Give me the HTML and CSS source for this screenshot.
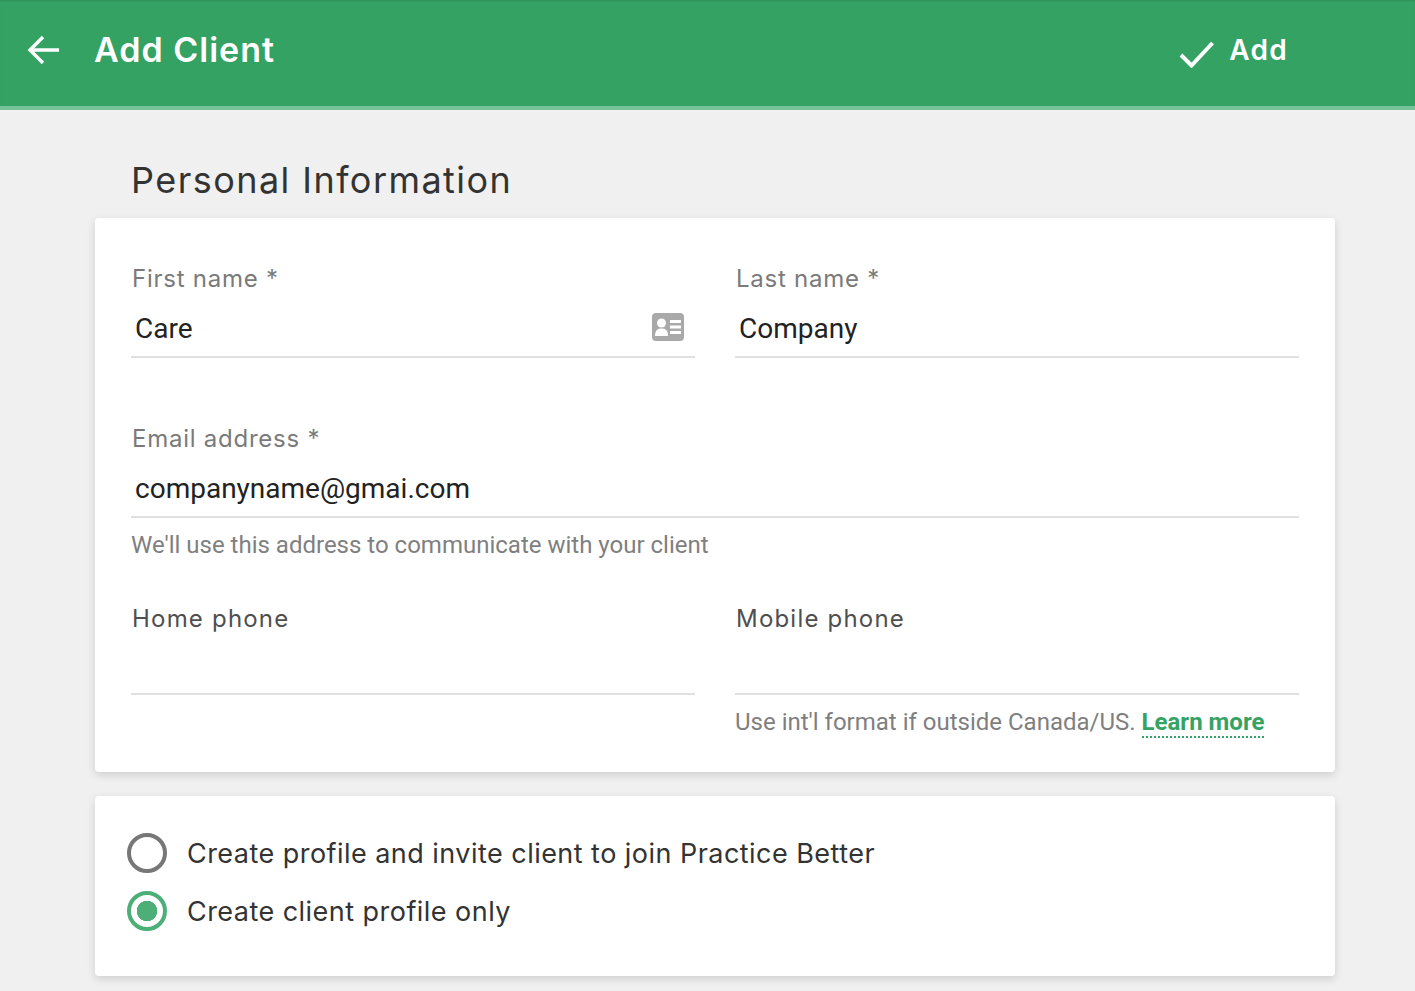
FILE: index.html
```html
<!DOCTYPE html>
<html lang="en">
<head>
<meta charset="utf-8">
<title>Add Client</title>
<link rel="stylesheet" href="styles.css">
</head>
<body>
<header class="topbar">
  <svg class="back" width="34" height="34" viewBox="0 0 34 34"><path d="M32 17H3M16 4 3 17l13 13" fill="none" stroke="#fff" stroke-width="3.400"/></svg>
  <h1 class="title">Add Client</h1>
  <div class="action">
    <svg class="check" width="36" height="28" viewBox="0 0 36 28"><path d="M2 15l10.500 10.500L33.500 3" fill="none" stroke="#fff" stroke-width="4"/></svg>
    <span class="action-text">Add</span>
  </div>
</header>
<main class="content">
  <h2 class="section-title">Personal Information</h2>
  <section class="card info">
    <div class="row">
      <div class="field">
        <label class="label muted">First name *</label>
        <div class="input"><span>Care</span>
          <svg class="contact" width="32" height="28" viewBox="0 0 32 28"><rect width="32" height="28" rx="4" fill="#a9a9a9"/><circle cx="9.500" cy="10" r="4.500" fill="#fff"/><path d="M3 23c0-6 3-7.500 6.500-7.500S16 17 16 23z" fill="#fff"/><path d="M18 7h11v3H18zM18 12.500h11v3H18zM18 18h11v3H18z" fill="#fff"/></svg>
        </div>
      </div>
      <div class="field">
        <label class="label muted">Last name *</label>
        <div class="input"><span>Company</span></div>
      </div>
    </div>
    <div class="field email">
      <label class="label muted">Email address *</label>
      <div class="input"><span>companyname@gmai.com</span></div>
      <p class="hint">We'll use this address to communicate with your client</p>
    </div>
    <div class="row phones">
      <div class="field">
        <label class="label">Home phone</label>
        <div class="input"></div>
      </div>
      <div class="field">
        <label class="label">Mobile phone</label>
        <div class="input"></div>
        <p class="hint">Use int'l format if outside Canada/US. <a class="learn" href="#">Learn more</a></p>
      </div>
    </div>
  </section>
  <section class="card options">
    <div class="option"><span class="radio"></span><span class="option-text">Create profile and invite client to join Practice Better</span></div>
    <div class="option"><span class="radio on"></span><span class="option-text">Create client profile only</span></div>
  </section>
</main>
</body>
</html>
```
FILE: styles.css
```css
* { box-sizing: border-box; }
html, body { margin: 0; height: 100%; }
body {
  background: #f0f0f0;
  height: 991px;
  overflow: hidden;
  font-family: Roboto, "Liberation Sans", sans-serif;
}
.topbar {
  height: 110px;
  background: #33a263;
  border-bottom: 4px solid #78c29a;
  display: flex;
  align-items: center;
  padding: 0 127px 6px 27px;
  box-shadow: inset 0 2px 2px -1px rgba(0,0,0,.12);
}
.back { flex: none; }
.title {
  margin: 0 0 0 33px;
  flex: 1;
  color: #fff;
  font: 600 34px/1 Inter, sans-serif;
  letter-spacing: 1px;
}
.action { display: flex; align-items: center; color: #fff; }
.check { margin: 8px 14px 0 0; }
.action-text { font: 600 28px/1 Inter, sans-serif; letter-spacing: 1.3px; }
.content { padding: 0 80px 0 95px; }
.section-title {
  margin: 0;
  padding: 49px 0 0 36px;
  height: 108px;
  font: 400 36px/42px Inter, sans-serif;
  color: #333;
  letter-spacing: 1.45px;
}
.card {
  background: #fff;
  border-radius: 4px;
  box-shadow: 0 3px 8px rgba(0,0,0,.14);
}
.info { height: 554px; padding: 43px 36px 0; }
.row { display: grid; grid-template-columns: 564px 564px; column-gap: 40px; }
.field { min-width: 0; }
.label {
  display: block;
  height: 35px;
  padding-left: 1px;
  font: 400 24px/36px Inter, sans-serif;
  color: #4f4f4f;
  letter-spacing: .75px;
}
.muted { color: #7a7a7a; }
.input {
  height: 62px;
  border-bottom: 2px solid #e0e0e0;
  display: flex;
  align-items: center;
  justify-content: space-between;
  padding: 4px 11px 0 4px;
  font-size: 28px;
  color: #222;
}
.contact { margin-top: -3px; }
.email { margin-top: 63px; }
.hint {
  margin: 0;
  padding-top: 12px;
  font-size: 24px;
  line-height: 30px;
  color: #7f7f7f;
  white-space: nowrap;
}
.phones { margin-top: 41px; }
.phones .label { letter-spacing: 1.2px; }
.phones .input { height: 59px; }
.learn {
  color: #34a364;
  font-weight: 700;
  text-decoration: none;
  border-bottom: 2px dotted #34a364;
}
.options { margin-top: 24px; height: 180px; padding: 28px 32px 0; }
.option { display: flex; align-items: center; height: 58px; }
.radio {
  width: 40px;
  height: 40px;
  border-radius: 50%;
  border: 4px solid #777;
  flex: none;
}
.radio.on {
  border-color: #4caf78;
  background: radial-gradient(circle, #4caf78 0 10px, transparent 10.500px);
}
.option-text {
  margin-left: 20px;
  font: 400 27px/1 Inter, sans-serif;
  color: #333;
  letter-spacing: .46px;
}
```
